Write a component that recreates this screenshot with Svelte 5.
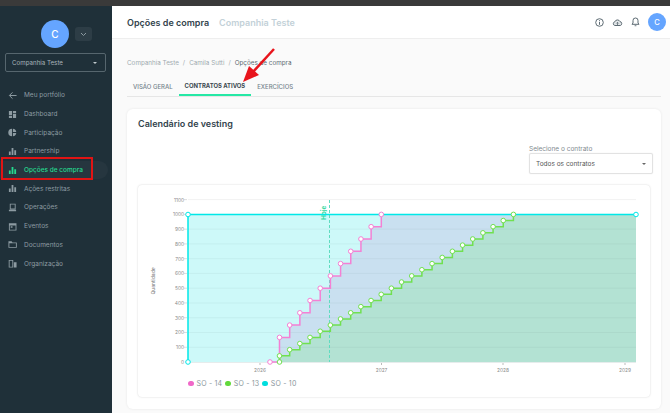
<script>
  const nav = [
    { label: 'Meu portfólio', icon: 'back' },
    { label: 'Dashboard', icon: 'dash' },
    { label: 'Participação', icon: 'pie' },
    { label: 'Partnership', icon: 'bars' },
    { label: 'Opções de compra', icon: 'bars', active: true },
    { label: 'Ações restritas', icon: 'bars' },
    { label: 'Operações', icon: 'ops' },
    { label: 'Eventos', icon: 'cal' },
    { label: 'Documentos', icon: 'folder' },
    { label: 'Organização', icon: 'org' }
  ]

  // chart scale
  const y = (v) => 361 - v * 0.1476
  const gridVals = [100, 200, 300, 400, 500, 600, 700, 800, 900, 1000, 1100]
  const years = [
    { x: 260, label: '2026' },
    { x: 381.5, label: '2027' },
    { x: 503, label: '2028' },
    { x: 625, label: '2029' }
  ]

  const pink = [{ x: 270, y: 361 }]
  for (let i = 0; i <= 10; i++) {
    pink.push({ x: 279.5 + i * 10.18, y: y(166.67 + i * 83.333) })
  }
  const green = [{ x: 279.5, y: 361 }]
  for (let i = 0; i <= 23; i++) {
    green.push({ x: 279.5 + i * 10.17, y: y(41.67 * (i + 1)) })
  }

  // horizontal first, then up to the next point
  const stepPath = (pts) => {
    let d = `M${pts[0].x} ${pts[0].y}`
    for (const p of pts.slice(1)) d += `H${p.x}V${p.y}`
    return d
  }
  const area = (pts) => `${stepPath(pts)}H636V361Z`
</script>

<div class="topstrip"></div>
<div class="page">
  <aside class="sidebar">
    <div class="user">
      <span class="avatar big">C</span>
      <button class="chev" aria-label="Abrir">
        <svg width="7" height="5" viewBox="0 0 7 5"><path d="M1 1l2.500 2.500L6 1" fill="none" stroke="#8c9aa1" stroke-width="1"/></svg>
      </button>
    </div>
    <div class="company">
      <span>Companhia Teste</span>
      <i class="caret light"></i>
    </div>
    <nav>
      {#each nav as item}
        <div class="item" class:active={item.active}>
          <svg class="ico" width="9" height="9" viewBox="0 0 10 10" fill="currentColor">
            {#if item.icon === 'back'}
              <path d="M9.500 5H2M5 1.500L1.500 5 5 8.500" fill="none" stroke="currentColor" stroke-width="1.100"/>
            {:else if item.icon === 'dash'}
              <path d="M1 1h3.500v4.500H1zM5.500 1H9v2.500H5.500zM5.500 4.500H9V9H5.500zM1 6.500h3.500V9H1z"/>
            {:else if item.icon === 'pie'}
              <path d="M4.500.8v8.400a4.200 4.200 0 0 1 0-8.400zM5.500.8a4.200 4.200 0 0 1 3.700 3.700H5.500zM5.500 5.500h3.700a4.200 4.200 0 0 1-3.700 3.700z"/>
            {:else if item.icon === 'bars'}
              <path d="M1 5h2v4H1zM4 1h2v8H4zM7 3.500h2V9H7z"/>
            {:else if item.icon === 'ops'}
              <path d="M2 .8h6.500v6.400H2zM3 1.800v4.400h4.500V1.800zM1 7.600h8v1.600H1z" fill-rule="evenodd"/>
            {:else if item.icon === 'cal'}
              <path d="M1 1.500h8.400v8H1zM2 3.800v4.700h6.400V3.800zM3 4.800h2v1.700H3z" fill-rule="evenodd"/>
            {:else if item.icon === 'folder'}
              <path d="M.5 1.500h3.500l1 1.200h4.800v6H.5zM1.500 3.700v4h7.300v-4z" fill-rule="evenodd"/>
            {:else}
              <path d="M.8 1h5v8.500H.8zM1.800 2v6.500h3V2zM6.500 3.500h3v6h-3z" fill-rule="evenodd"/>
            {/if}
          </svg>
          <span>{item.label}</span>
        </div>
      {/each}
    </nav>
    <div class="redbox"></div>
  </aside>

  <main>
    <header>
      <h1>Opções de compra</h1>
      <h2>Companhia Teste</h2>
      <div class="actions">
        <svg width="9" height="9" viewBox="0 0 9 9"><circle cx="4.500" cy="4.500" r="3.800" fill="none" stroke="#5d6b73" stroke-width="1"/><path d="M4.500 2.200v.8M4.500 3.800v3" stroke="#5d6b73" stroke-width="1"/></svg>
        <svg width="11" height="9" viewBox="0 0 11 9"><path d="M2.800 7.500A1.900 1.900 0 0 1 2.800 3.800 2.800 2.800 0 0 1 8 3.600 2 2 0 0 1 8.300 7.500z" fill="#e4e8ea" stroke="#5d6b73" stroke-width="1"/><path d="M5.500 7.500V4.300M4.300 5.500l1.200-1.200 1.200 1.200" stroke="#5d6b73" stroke-width=".8" fill="none"/></svg>
        <svg width="9" height="10" viewBox="0 0 9 10"><path d="M4.500 1a2.500 2.500 0 0 1 2.500 2.700V6l1 1.300H1L2 6V3.700A2.500 2.500 0 0 1 4.500 1z" fill="none" stroke="#5d6b73" stroke-width="1"/><path d="M3.600 8.300h1.800v.9H3.600z" fill="#5d6b73"/></svg>
        <span class="avatar small">C</span>
      </div>
    </header>

    <div class="content">
      <div class="crumbs">
        <span>Companhia Teste</span><b>/</b><span>Camila Sutti</span><b>/</b><span class="cur">Opções de compra</span>
      </div>
      <div class="tabs">
        <span class="tab">VISÃO GERAL</span>
        <span class="tab on">CONTRATOS ATIVOS</span>
        <span class="tab">EXERCÍCIOS</span>
      </div>

      <section class="card">
        <h3>Calendário de vesting</h3>
        <div class="filter">
          <label for="contract">Selecione o contrato</label>
          <div class="select" id="contract">
            <span>Todos os contratos</span>
            <i class="caret"></i>
          </div>
        </div>

        <div class="chartbox">
          <svg class="chart" width="512" height="212" viewBox="138 184 512 212">
            <rect x="188" y="213.500" width="448" height="147.500" fill="#cdf9f9"/>
            <path d={area(pink)} fill="#c9e0f0"/>
            <path d={area(green)} fill="#b3e2d3"/>

            {#each gridVals as v}
              <line x1="188" x2="636" y1={y(v)} y2={y(v)} stroke={v === 1100 ? '#f2f2f2' : 'rgba(90,120,120,.07)'} stroke-width="1"/>
              <line x1="184" x2="187" y1={y(v)} y2={y(v)} stroke="#ddd" stroke-width="1"/>
            {/each}
            {#each [0, ...gridVals] as v}
              <text class="tick" x="184" y={y(v) + 2} text-anchor="end">{v}</text>
            {/each}
            <line x1="188" x2="636" y1="361.500" y2="361.500" stroke="#e6ecec"/>
            {#each years as yr}
              <line x1={yr.x} x2={yr.x} y1="362" y2="364" stroke="#bbb"/>
              <text class="tick" x={yr.x} y="370.500" text-anchor="middle">{yr.label}</text>
            {/each}
            <text class="axis" transform="translate(154.500 280) rotate(-90)" text-anchor="middle">Quantidade</text>

            <line x1="329.500" x2="329.500" y1="199" y2="361" stroke="#5fdcc0" stroke-dasharray="3 2" stroke-width="1"/>
            <text class="hoje" transform="translate(326 219) rotate(-90)">Hoje</text>

            <path d="M188 361V213.500H636" fill="none" stroke="#00e8e8" stroke-width="1.500"/>
            <path d={stepPath(pink)} fill="none" stroke="#f480d4" stroke-width="1.500"/>
            <path d={stepPath(green)} fill="none" stroke="#70e050" stroke-width="1.500"/>

            {#each [[188, 361], [188, 213.5], [636, 213.5]] as [cx, cy]}
              <circle {cx} {cy} r="2.300" fill="#fff" stroke="#00e8e8" stroke-width="1"/>
            {/each}
            {#each pink as p}
              <circle cx={p.x} cy={p.y} r="2.300" fill="#fff" stroke="#f480d4" stroke-width="1"/>
            {/each}
            {#each green as p}
              <circle cx={p.x} cy={p.y} r="2.300" fill="#fff" stroke="#70e050" stroke-width="1"/>
            {/each}
          </svg>
          <div class="legend">
            <span class="dot" style="background:#f068c8"></span><span>SO - 14</span>
            <span class="dot" style="background:#62d93c"></span><span>SO - 13</span>
            <span class="dot" style="background:#00dede"></span><span>SO - 10</span>
          </div>
        </div>
      </section>
    </div>

    <svg class="arrow" width="40" height="42" viewBox="0 0 40 42">
      <path d="M34 2L12 26" stroke="#e8141c" stroke-width="2.500" fill="none"/>
      <path d="M3 35L9 19l10 9z" fill="#e8141c"/>
    </svg>
  </main>
</div>

<style>
  :global(body) { margin: 0; background: #fafafa; font-family: Inter, 'Open Sans', sans-serif; overflow: hidden; }
  .topstrip { height: 6px; background: #3a3a3a; }
  .page { display: flex; height: 407px; }

  .sidebar { position: relative; width: 112px; flex-shrink: 0; background: #1f3039; color: #8d9ba2; box-sizing: border-box; padding-top: 14px; }
  .user { display: flex; align-items: center; justify-content: flex-start; gap: 6px; padding-left: 41px; }
  .avatar { display: flex; align-items: center; justify-content: center; background: #65a5ff; color: #fff; border-radius: 50%; font-weight: 500; }
  .avatar.big { width: 28px; height: 28px; font-size: 10px; }
  .avatar.small { width: 18px; height: 18px; font-size: 7.500px; }
  .chev { width: 17px; height: 14px; padding: 0; border: none; border-radius: 3px; background: #2d3d46; display: flex; align-items: center; justify-content: center; }
  .company { margin: 5px 6px 0 5px; height: 19px; box-sizing: border-box; border: 1px solid #56666e; border-radius: 2px; display: flex; align-items: center; justify-content: space-between; padding: 0 8px 0 6px; font-size: 6.200px; color: #a9b4b9; }
  .caret { width: 0; height: 0; border-left: 2px solid transparent; border-right: 2px solid transparent; border-top: 2.500px solid #666; }
  .caret.light { border-top-color: #c0c9cd; }

  nav { margin-top: 14px; display: flex; flex-direction: column; }
  .item { height: 18.700px; display: flex; align-items: center; gap: 7px; padding-left: 8px; font-size: 6.500px; border-radius: 0 10px 10px 0; margin-right: 4px; white-space: nowrap; }
  .ico { flex-shrink: 0; }
  .item.active { color: #25d98f; background: #26363f; font-weight: 500; }
  .redbox { position: absolute; left: 1px; top: 151px; width: 92px; height: 23px; box-sizing: border-box; border: 2.500px solid #e01414; }

  main { position: relative; flex: 1; min-width: 0; }
  header { height: 32px; background: #fff; border-bottom: 1px solid #eee; display: flex; align-items: center; padding: 0 4px 0 15px; gap: 10px; }
  h1 { margin: 0; font-size: 9px; font-weight: 600; color: #33444d; }
  h2 { margin: 0; font-size: 9px; font-weight: 600; color: #c3d1d8; }
  .actions { margin-left: auto; display: flex; align-items: center; gap: 8px; }

  .content { padding: 0 9px 0 15px; }
  .crumbs { margin-top: 20px; display: flex; gap: 4px; font-size: 6.300px; color: #a0aaaf; }
  .crumbs b { font-weight: 400; }
  .crumbs .cur { color: #5c6b73; }

  .tabs { margin-top: 11px; display: flex; border-bottom: 1px solid #e6e6e6; }
  .tab { padding: 0 6px 2px; height: 18px; display: flex; align-items: center; box-sizing: border-box; font-size: 6px; font-weight: 500; color: #75848c; }
  .tab.on { color: #3a4850; font-weight: 700; font-size: 5.900px; border-bottom: 2px solid #25e8a5; height: 18px; }

  .card { position: relative; margin-top: 12px; height: 300px; box-sizing: border-box; background: #fff; border-radius: 6px; box-shadow: 0 0 3px rgba(0,0,0,.08); padding: 9px 11px 0; }
  h3 { margin: 0; font-size: 9px; font-weight: 600; color: #33444d; line-height: 11px; }
  .filter { position: absolute; left: 402px; top: 36px; width: 124px; }
  label { display: block; font-size: 6.500px; color: #7f8a90; margin-bottom: 0; }
  .select { height: 21px; box-sizing: border-box; border: 1px solid #e2e2e2; border-radius: 2px; box-shadow: 0 0 1px rgba(0,0,0,.15); display: flex; align-items: center; justify-content: space-between; padding: 0 6px; font-size: 6.500px; color: #555; }

  .chartbox { position: absolute; left: 11px; top: 76px; width: 512px; height: 212px; box-sizing: border-box; border-radius: 4px; box-shadow: 0 0 2px rgba(0,0,0,.18); }
  .chart { position: absolute; left: 0; top: 0; }
  .tick { font-size: 4.800px; fill: #888; font-family: Inter, sans-serif; }
  .axis { font-size: 5px; fill: #777; font-family: Inter, sans-serif; }
  .hoje { font-size: 6.500px; font-weight: 700; fill: #2ed8a0; font-family: Inter, sans-serif; }
  .legend { position: absolute; left: 50px; top: 194px; display: flex; align-items: center; gap: 3px; font-size: 7px; letter-spacing: .2px; color: #8a969b; white-space: nowrap; }
  .dot { width: 5.500px; height: 5.500px; border-radius: 50%; }

  .arrow { position: absolute; left: 128px; top: 41px; pointer-events: none; }
</style>
